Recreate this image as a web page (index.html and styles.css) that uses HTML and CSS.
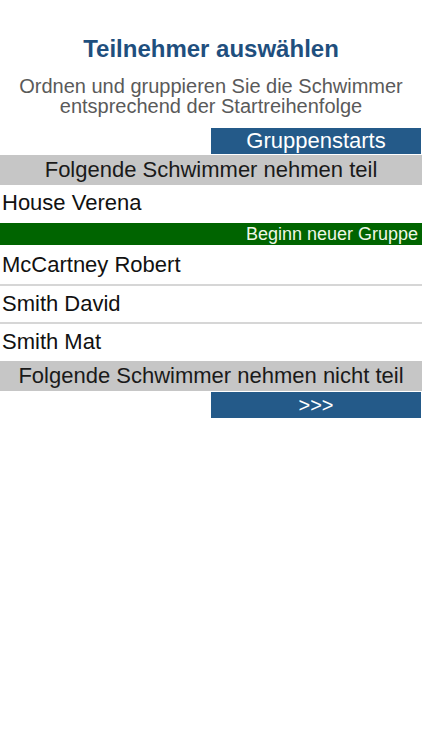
FILE: index.html
```html
<!DOCTYPE html>
<html lang="de">
<head>
<meta charset="utf-8">
<title>Teilnehmer auswählen</title>
<link rel="stylesheet" href="styles.css">
</head>
<body>
<div class="page">
  <h1 class="title">Teilnehmer auswählen</h1>
  <p class="subtitle">Ordnen und gruppieren Sie die Schwimmer<br>entsprechend der Startreihenfolge</p>
  <div class="action-row top"><div class="action">Gruppenstarts</div></div>
  <div class="section">Folgende Schwimmer nehmen teil</div>
  <div class="swimmer first">House Verena</div>
  <div class="group">Beginn neuer Gruppe</div>
  <div class="swimmer second">McCartney Robert</div>
  <div class="swimmer">Smith David</div>
  <div class="swimmer last">Smith Mat</div>
  <div class="section">Folgende Schwimmer nehmen nicht teil</div>
  <div class="action-row bottom"><div class="action small">&gt;&gt;&gt;</div></div>
</div>
</body>
</html>
```
FILE: styles.css
```css
html, body {
  margin: 0;
  padding: 0;
  background: #ffffff;
}
body {
  font-family: "Liberation Sans", Arial, sans-serif;
}
.page {
  display: flex;
  flex-direction: column;
  padding-top: 35px;
}
.title {
  margin: 0;
  text-align: center;
  font-size: 24px;
  font-weight: bold;
  color: #1f4f7e;
  line-height: 28px;
}
.subtitle {
  margin: 13px 0 0 0;
  text-align: center;
  font-size: 20px;
  line-height: 20px;
  color: #5a5a5a;
}
.action-row {
  display: flex;
  justify-content: flex-end;
  padding-right: 1px;
}
.action-row.top {
  margin-top: 12px;
}
.action-row.bottom {
  margin-top: 1px;
}
.action {
  width: 210px;
  height: 26px;
  background: #245a89;
  color: #ffffff;
  font-size: 22px;
  line-height: 26px;
  text-align: center;
}
.action.small {
  font-size: 20px;
}
.section {
  margin-top: 1px;
  height: 30px;
  line-height: 30px;
  background: #c6c6c6;
  color: #1a1a1a;
  text-align: center;
  font-size: 22px;
}
.swimmer {
  padding-left: 2px;
  height: 36px;
  line-height: 36px;
  font-size: 22px;
  color: #111111;
  border-bottom: 2px solid #d6d6d6;
}
.swimmer.first {
  border-bottom: none;
  height: 38px;
  line-height: 36px;
}
.swimmer.second {
  height: 39px;
  line-height: 39px;
}
.swimmer.last {
  border-bottom: none;
}
.group {
  height: 22px;
  line-height: 22px;
  background: #006400;
  color: #eef7e6;
  font-size: 18px;
  text-align: right;
  padding-right: 4px;
}
```
